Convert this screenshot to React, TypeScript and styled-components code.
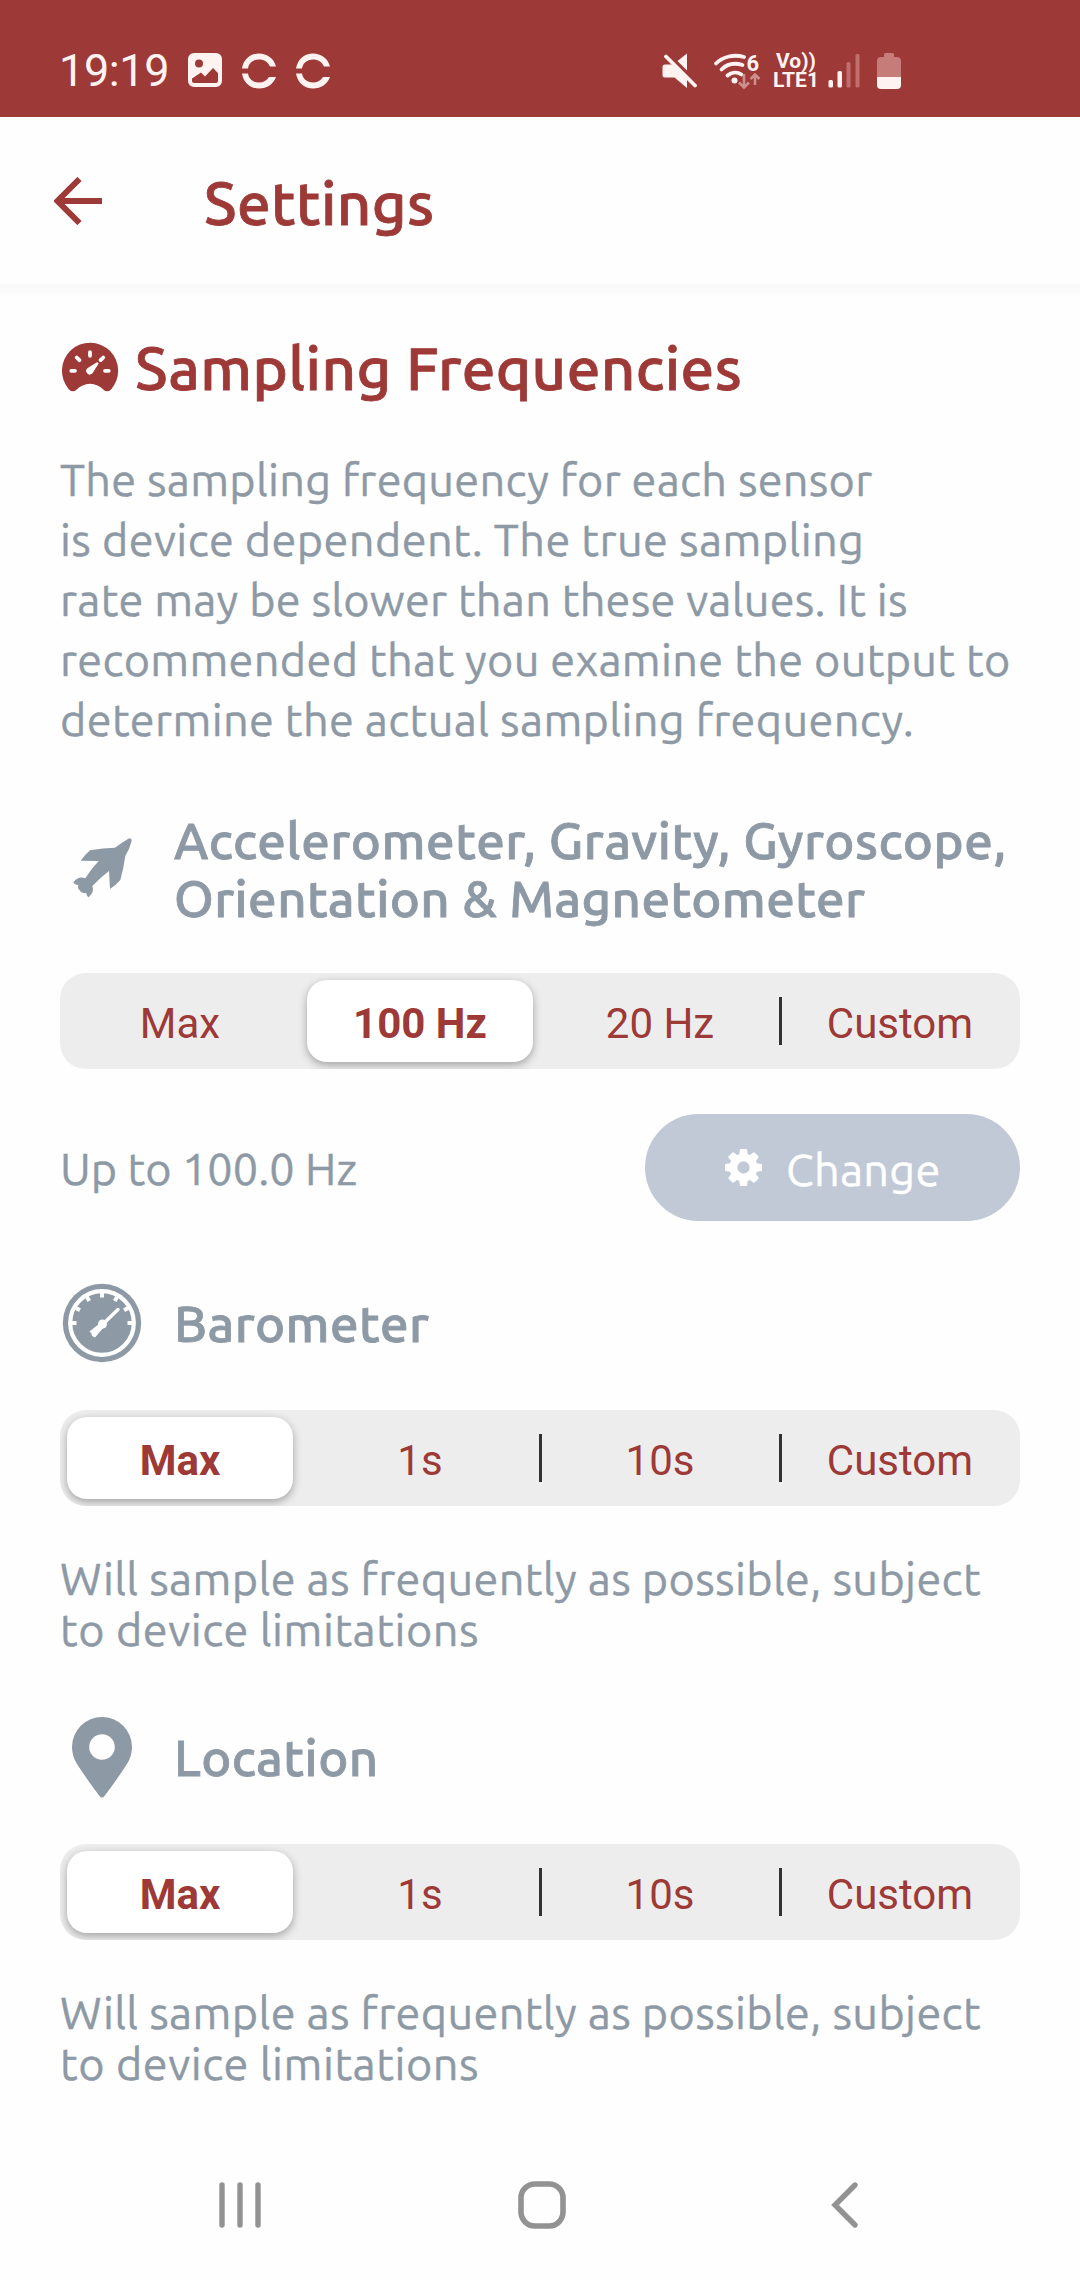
import React from 'react';
import styled, { createGlobalStyle } from 'styled-components';
import { IoSpeedometer } from 'react-icons/io5';

const RED = '#9d3936';
const GREY = '#8d99a5';
const STATUS = '#fff3f1';

const GlobalStyle = createGlobalStyle`
  * { box-sizing: border-box; }
  body { margin: 0; background: #fefefe; }
  svg { display: block; flex: none; }
`;

const Screen = styled.div`
  display: flex;
  flex-direction: column;
  width: 1080px;
  height: 2280px;
  background: #fefefe;
  font-family: Ubuntu, "Noto Sans", sans-serif;
`;

const StatusBar = styled.div`
  display: flex;
  justify-content: space-between;
  align-items: center;
  height: 117px;
  padding: 25px 178px 0 59px;
  background: ${RED};
  color: ${STATUS};
  font-family: Roboto, sans-serif;
`;

const StatusGroup = styled.div`
  display: flex;
  align-items: center;
`;

const Spacer = styled.span<{ $w: number }>`
  flex: none;
  width: ${p => p.$w}px;
`;

const Clock = styled.span`
  width: 129px;
  font-size: 45px;
  line-height: 50px;
  letter-spacing: -0.4px;
`;

const Notices = styled.div`
  display: flex;
  gap: 20px;
`;

const Network = styled.span`
  width: 46px;
  margin-left: 12px;
  font-weight: 700;
  font-size: 21px;
  line-height: 19.5px;
  text-align: center;
  white-space: pre-line;
`;

const Header = styled.header`
  display: flex;
  align-items: center;
  height: 167px;
  padding: 0 54px;
`;

const Title = styled.h1`
  margin: 0 0 0 102px;
  padding-top: 4px;
  font-size: 60px;
  font-weight: 500;
  line-height: 80px;
  letter-spacing: 0.35px;
  -webkit-text-stroke: 0.8px currentColor;
  color: ${RED};
`;

const HeaderShade = styled.div`
  height: 11px;
  background: linear-gradient(#f9f9f9, #fcfcfc);
`;

const Content = styled.main`
  display: flex;
  flex-direction: column;
  padding: 32px 60px 0;
`;

const Heading = styled.h2`
  display: flex;
  align-items: center;
  gap: 15px;
  height: 80px;
  margin: 0 0 43px;
  font-size: 60px;
  font-weight: 500;
  letter-spacing: 0.4px;
  white-space: nowrap;
  -webkit-text-stroke: 0.8px currentColor;
  color: ${RED};
`;

const Line = styled.span<{ $tracking?: number }>`
  display: block;
  letter-spacing: ${p => p.$tracking ?? 0}px;
  white-space: nowrap;
`;

const Copy = styled.p<{ $leading: number }>`
  margin: 0;
  font-size: 45px;
  line-height: ${p => p.$leading}px;
  -webkit-text-stroke: 0.4px currentColor;
  color: ${GREY};
`;

const Rate = styled(Copy)`
  padding-top: 3px;
`;

const SensorHeader = styled.div<{ $top: number; $bottom?: number }>`
  display: grid;
  grid-template-columns: 114px 1fr;
  align-items: center;
  min-height: 84px;
  margin: ${p => p.$top}px 0 ${p => p.$bottom ?? 45}px;
`;

const SensorName = styled.h3`
  margin: 0;
  font-size: 51px;
  font-weight: 500;
  line-height: 58px;
  -webkit-text-stroke: 0.8px currentColor;
  color: ${GREY};
`;

const Segments = styled.div`
  display: grid;
  grid-template-columns: repeat(4, 1fr);
  height: 96px;
  border-radius: 26px;
  background: #ededed;
  overflow: hidden;
`;

const Segment = styled.div`
  display: flex;
  align-items: center;
`;

const Divider = styled.span`
  width: 3px;
  height: 48px;
  margin: 0 -2px 0 -1px;
  background: #333;
`;

const Option = styled.button<{ $selected: boolean }>`
  flex: 1;
  height: 82px;
  margin: 0 7px;
  padding: 4px 0 0;
  border: 0;
  border-radius: 20px;
  background: ${p => (p.$selected ? '#fff' : 'transparent')};
  box-shadow: ${p => (p.$selected ? '0 3px 8px rgba(0, 0, 0, 0.32)' : 'none')};
  font-family: Roboto, sans-serif;
  font-size: 42px;
  font-weight: ${p => (p.$selected ? 700 : 400)};
  color: ${RED};
`;

const RateRow = styled.div`
  display: flex;
  justify-content: space-between;
  align-items: center;
  margin-top: 45px;
`;

const ChangeButton = styled.button`
  display: flex;
  align-items: center;
  gap: 24px;
  width: 375px;
  height: 107px;
  padding: 0 0 0 80px;
  border: 0;
  border-radius: 54px;
  background: #c1c9d6;
  font-family: inherit;
  font-size: 45px;
  letter-spacing: 0.3px;
  color: #fff;
`;

const ChangeLabel = styled.span`
  padding-top: 3px;
  -webkit-text-stroke: 0.4px currentColor;
`;

const Note = styled(Copy)`
  margin-top: 47px;
`;

const NavBar = styled.nav`
  display: flex;
  justify-content: space-between;
  align-items: center;
  height: 150px;
  margin-top: auto;
  padding: 0 213px 0 217px;
`;

function PictureIcon() {
  return (
    <svg width="34" height="34" viewBox="0 0 34 34">
      <path
        fill={STATUS}
        fillRule="evenodd"
        d="M6 0h22a6 6 0 0 1 6 6v22a6 6 0 0 1-6 6H6a6 6 0 0 1-6-6V6a6 6 0 0 1 6-6zM11 6.500a4 4 0 1 0 0 8a4 4 0 1 0 0-8zM4 25.500V28q0 2 2 2h22q2 0 2-2V20l-5-5L17 23.500l-4-4z"
      />
    </svg>
  );
}

function BrokenRingIcon() {
  return (
    <svg width="34" height="36" viewBox="0 0 34 36">
      <path
        fill={STATUS}
        d="M0 15.500C1.500 6 8.500 0.500 17 0.500C25 0.500 32 5.500 34 13.500H28C26 9 22 6.500 17 6.500C11 6.500 7 10 6 15.500zM0 20.500H6C7 26 11 29.500 17 29.500C21.500 29.500 25 27.500 27 24H34C31.500 31 25 35.500 17 35.500C8.500 35.500 1.500 30 0 20.500z"
      />
    </svg>
  );
}

function MuteIcon() {
  return (
    <svg width="36" height="36" viewBox="0 0 36 36">
      <path
        fill={STATUS}
        d="M16.500 8L26 0.500V17.500zM4 11.500H12.500L26 25V35L13.500 24.500H4Q1.500 24.500 1.500 22V14Q1.500 11.500 4 11.500z"
      />
      <path d="M5 3.500L34 32.500" stroke={STATUS} strokeWidth="3.800" strokeLinecap="round" />
    </svg>
  );
}

function WifiIcon() {
  return (
    <svg width="48" height="38" viewBox="0 0 48 38">
      <g fill="none" stroke={STATUS} strokeWidth="3.800" strokeLinecap="round">
        <path d="M3 11.500C10 4.500 21 2 31 5" />
        <path d="M8.500 17.500C14 12 21.500 10.500 29.500 13" />
        <path d="M14.500 23.500C18.500 20 24 19.500 28.500 22.500" />
      </g>
      <circle cx="21.500" cy="28.500" r="3" fill={STATUS} />
      <text x="33.500" y="18.500" fontFamily="Roboto" fontWeight="700" fontSize="22" fill={STATUS}>6</text>
      <g fill="none" stroke="#cd8f8c" strokeWidth="2.600">
        <path d="M31 22V35M26 30.500L31 35.500L36 30.500" />
        <path d="M42 33V23M37.500 27L42 22.500L46.500 27" />
      </g>
    </svg>
  );
}

function SignalIcon() {
  return (
    <svg width="34" height="36" viewBox="0 0 34 36">
      <g fill={STATUS}>
        <rect x="0.500" y="27" width="4.500" height="7.500" rx="1.500" />
        <rect x="9.500" y="18" width="4.500" height="16.500" rx="1.500" />
      </g>
      <g fill="#c06f6c">
        <rect x="18.500" y="9" width="4" height="25.500" rx="1.500" />
        <rect x="27.500" y="1" width="4" height="33.500" rx="1.500" />
      </g>
    </svg>
  );
}

function BatteryIcon() {
  return (
    <svg width="26" height="36" viewBox="0 0 26 36">
      <path fill="#c67c79" d="M8 1.500Q8 0 9.500 0h7Q18 0 18 1.500V4h3q4 0 4 4V24H1V8q0-4 4-4h3z" />
      <path fill={STATUS} d="M1 24H25V32q0 4-4 4H5q-4 0-4-4z" />
    </svg>
  );
}

function BackArrow() {
  return (
    <svg width="48" height="48" viewBox="0 0 48 48">
      <path d="M48 24H4M25.500 2L3.500 24L25.500 46" fill="none" stroke={RED} strokeWidth="6" />
    </svg>
  );
}

function PlaneIcon() {
  return (
    <svg width="90" height="90" viewBox="0 -3 270 270">
      <path
        fill={GREY}
        d="M204 42Q215 36 215 48Q209 72 196 92Q191 130 181 165Q168 180 150 192L147 138Q122 157 97 183Q104 200 86 217Q80 214 79 205Q60 203 58 194Q52 192 55 180Q44 180 40 172Q55 152 76 160Q92 134 116 108L62 107Q74 90 90 76Q130 68 165 68Q184 54 204 42z"
      />
    </svg>
  );
}

const TICKS = [-90, -60, -30, 0, 30, 60, 90];

function BarometerIcon() {
  return (
    <svg width="84" height="84" viewBox="-42 -42 84 84">
      <circle r="39.200" fill={GREY} />
      <circle r="31.800" fill="none" stroke="#fff" strokeWidth="4.200" />
      {TICKS.map(angle => (
        <path key={angle} d="M0 -31V-25.500" stroke="#fff" strokeWidth="4" transform={`rotate(${angle})`} />
      ))}
      <path d="M0 2L16 -13.500" stroke="#fff" strokeWidth="3.400" strokeLinecap="round" />
      <circle cx="0.500" cy="1" r="4.500" fill="#fff" />
      <path d="M-3 1L-12.500 8.500L-10.500 10.500L-10 13L-7 14.500L2 4z" fill="#fff" />
    </svg>
  );
}

function PinIcon() {
  return (
    <svg width="84" height="84" viewBox="0 0 84 84">
      <path
        fill={GREY}
        fillRule="evenodd"
        d="M42 2A30 30 0 0 1 72 32Q72 41 67 49Q56 66 44.500 81Q42 84 39.500 81Q28 66 17 49Q12 41 12 32A30 30 0 0 1 42 2zM42 19.200a12.800 12.800 0 1 0 0 25.600a12.800 12.800 0 1 0 0-25.600z"
      />
    </svg>
  );
}

function GearIcon() {
  return (
    <svg width="37" height="37" viewBox="128 128 1536 1536">
      <path
        fill="#fff"
        d="M1152 896q0-106-75-181t-181-75-181 75-75 181 75 181 181 75 181-75 75-181zm512-109v222q0 12-8 23t-20 13l-185 28q-19 54-39 91 35 50 107 138 10 12 10 25t-9 23q-27 37-99 108t-94 71q-12 0-26-9l-138-108q-44 23-91 38-16 136-29 186-7 28-36 28h-222q-14 0-24.500-8.500t-11.500-21.500l-28-184q-49-16-90-37l-141 107q-10 9-25 9-14 0-25-11-126-114-165-168-7-10-7-23 0-12 8-23 15-21 51-66.500t54-70.500q-27-50-41-99l-183-27q-13-2-21-12.500t-8-23.500v-222q0-12 8-23t19-13l186-28q14-46 39-92-40-57-107-138-10-12-10-24 0-10 9-23 26-36 98.500-107.500t94.500-71.500q13 0 26 10l138 107q44-23 91-38 16-136 29-186 7-28 36-28h222q14 0 24.500 8.500t11.500 21.500l28 184q49 16 90 37l142-107q9-9 24-9 13 0 25 10 129 119 165 170 7 8 7 22 0 12-8 23-15 21-51 66.500t-54 70.500q26 50 41 98l183 28q13 2 21 12.500t8 23.500z"
      />
    </svg>
  );
}

function SegmentedControl({ options, selected }: { options: string[]; selected: number }) {
  return (
    <Segments>
      {options.map((option, i) => (
        <Segment key={option}>
          {i > 0 && i !== selected && i - 1 !== selected && <Divider />}
          <Option $selected={i === selected}>{option}</Option>
        </Segment>
      ))}
    </Segments>
  );
}

function LimitNote() {
  return (
    <Note $leading={51}>
      <Line $tracking={0.37}>Will sample as frequently as possible, subject</Line>
      <Line $tracking={0.55}>to device limitations</Line>
    </Note>
  );
}

export default function App() {
  return (
    <Screen>
      <GlobalStyle />
      <StatusBar>
        <StatusGroup>
          <Clock>19:19</Clock>
          <Notices>
            <PictureIcon />
            <BrokenRingIcon />
            <BrokenRingIcon />
          </Notices>
        </StatusGroup>
        <StatusGroup>
          <MuteIcon />
          <Spacer $w={16} />
          <WifiIcon />
          <Network>{'Vo))\nLTE1'}</Network>
          <Spacer $w={9} />
          <SignalIcon />
          <Spacer $w={14} />
          <BatteryIcon />
        </StatusGroup>
      </StatusBar>
      <Header>
        <BackArrow />
        <Title>Settings</Title>
      </Header>
      <HeaderShade />
      <Content>
        <Heading>
          <IoSpeedometer size={60} strokeWidth={0} />
          Sampling Frequencies
        </Heading>
        <Copy $leading={60}>
          <Line $tracking={0.28}>The sampling frequency for each sensor</Line>
          <Line $tracking={0.41}>is device dependent. The true sampling</Line>
          <Line $tracking={0.26}>rate may be slower than these values. It is</Line>
          <Line $tracking={0.33}>recommended that you examine the output to</Line>
          <Line $tracking={0.36}>determine the actual sampling frequency.</Line>
        </Copy>

        <SensorHeader $top={61} $bottom={46}>
          <PlaneIcon />
          <SensorName>
            <Line $tracking={0.52}>Accelerometer, Gravity, Gyroscope,</Line>
            <Line $tracking={0.36}>Orientation &amp; Magnetometer</Line>
          </SensorName>
        </SensorHeader>
        <SegmentedControl options={['Max', '100 Hz', '20 Hz', 'Custom']} selected={1} />
        <RateRow>
          <Rate $leading={60}>
            <Line $tracking={0.05}>Up to 100.0 Hz</Line>
          </Rate>
          <ChangeButton>
            <GearIcon />
            <ChangeLabel>Change</ChangeLabel>
          </ChangeButton>
        </RateRow>

        <SensorHeader $top={60}>
          <BarometerIcon />
          <SensorName>
            <Line $tracking={0.4}>Barometer</Line>
          </SensorName>
        </SensorHeader>
        <SegmentedControl options={['Max', '1s', '10s', 'Custom']} selected={0} />
        <LimitNote />

        <SensorHeader $top={60}>
          <PinIcon />
          <SensorName>
            <Line $tracking={0.4}>Location</Line>
          </SensorName>
        </SensorHeader>
        <SegmentedControl options={['Max', '1s', '10s', 'Custom']} selected={0} />
        <LimitNote />
      </Content>
      <NavBar>
        <svg width="46" height="50" viewBox="0 0 46 50">
          <path d="M5 5V45M23 5V45M41 5V45" stroke="#929292" strokeWidth="5.400" strokeLinecap="round" />
        </svg>
        <svg width="50" height="50" viewBox="0 0 50 50">
          <rect x="4" y="4" width="42" height="42" rx="14" fill="none" stroke="#929292" strokeWidth="5.600" />
        </svg>
        <svg width="46" height="50" viewBox="0 0 46 50">
          <path d="M34 5L14 25L34 45" fill="none" stroke="#929292" strokeWidth="5.400" strokeLinecap="round" />
        </svg>
      </NavBar>
    </Screen>
  );
}
